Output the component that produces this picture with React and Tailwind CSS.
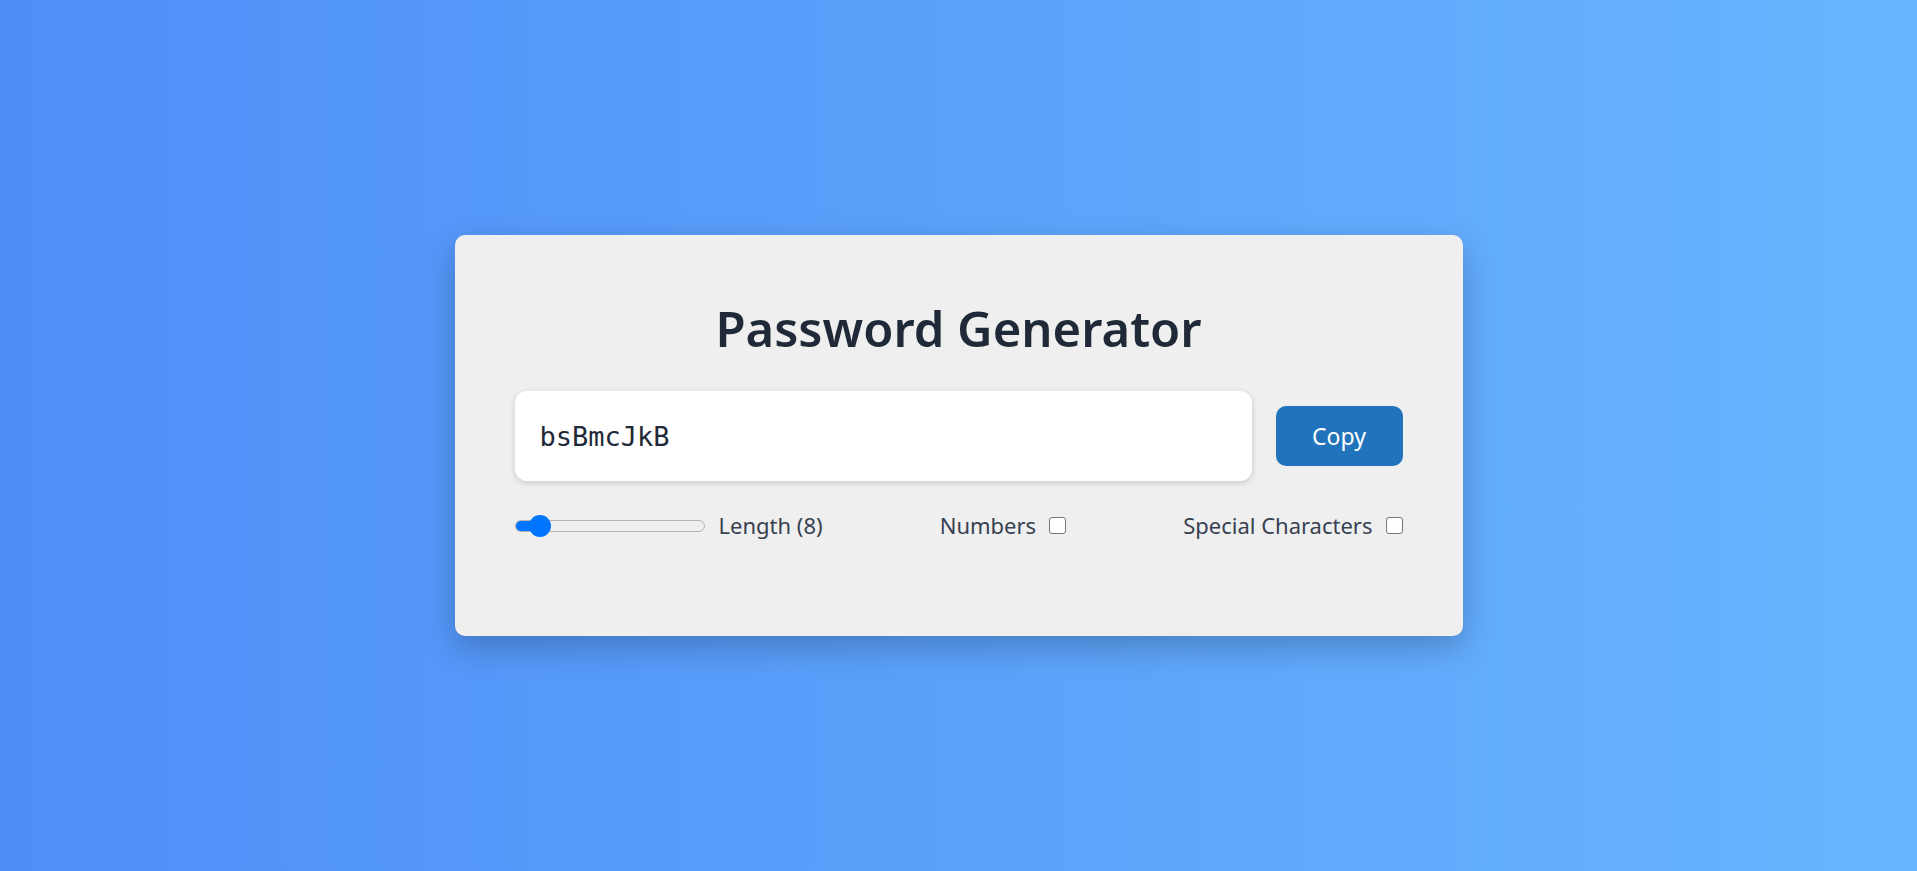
import { useState } from "react";

const App = () => {
  const [length, setLength] = useState(8);
  const [numbers, setNumbers] = useState(false);
  const [special, setSpecial] = useState(false);
  const password = "bsBmcJkB";

  // thumb is 22px on a 190px track, fill runs to the thumb centre
  const fill = 11 + (length / 100) * 168;

  return (
    <div className="min-h-screen w-full flex items-center justify-center bg-gradient-to-r from-[#4e8ef7] to-[#69b5fe] font-['Noto_Sans',sans-serif]">
      <div className="w-[1008px] h-[401px] px-[60px] pt-[69px] bg-[#efefef] rounded-[10px] shadow-[0_12px_32px_rgba(0,0,0,0.22)] flex flex-col">
        <h1 className="text-center text-[49px] leading-none font-semibold text-[#1f2937]">
          Password Generator
        </h1>

        <div className="mt-[38px] flex items-center gap-6">
          <input
            type="text"
            readOnly
            value={password}
            className="flex-1 min-w-0 h-[90px] px-[25px] bg-white rounded-[12px] shadow-[0_2px_6px_rgba(0,0,0,0.16)] outline-none font-['DejaVu_Sans_Mono',monospace] text-[27px] text-[#1f2937]"
          />
          <button className="w-[127px] h-[60px] shrink-0 rounded-[10px] bg-[#2174bb] text-white text-[23px]">
            Copy
          </button>
        </div>

        <div className="mt-[28px] flex items-center justify-between text-[22px] text-[#374151]">
          <div className="flex items-center gap-[14px]">
            <input
              type="range"
              min={0}
              max={100}
              value={length}
              onChange={(e) => setLength(Number(e.target.value))}
              className="appearance-none w-[190px] h-[12px] rounded-full border border-[#b5b5b5] cursor-pointer [&::-webkit-slider-thumb]:appearance-none [&::-webkit-slider-thumb]:w-[22px] [&::-webkit-slider-thumb]:h-[22px] [&::-webkit-slider-thumb]:rounded-full [&::-webkit-slider-thumb]:bg-[#0075ff]"
              style={{
                background: `linear-gradient(to right, #0075ff ${fill}px, #efefef ${fill}px)`,
              }}
            />
            <span>Length ({length})</span>
          </div>

          <label className="flex items-center gap-[13px]">
            <span>Numbers</span>
            <input
              type="checkbox"
              checked={numbers}
              onChange={() => setNumbers(!numbers)}
              className="appearance-none w-[17px] h-[17px] rounded-[3px] border border-[#767676] bg-white checked:bg-[#0075ff]"
            />
          </label>

          <label className="flex items-center gap-[13px]">
            <span>Special Characters</span>
            <input
              type="checkbox"
              checked={special}
              onChange={() => setSpecial(!special)}
              className="appearance-none w-[17px] h-[17px] rounded-[3px] border border-[#767676] bg-white checked:bg-[#0075ff]"
            />
          </label>
        </div>
      </div>
    </div>
  );
};

export default App;
